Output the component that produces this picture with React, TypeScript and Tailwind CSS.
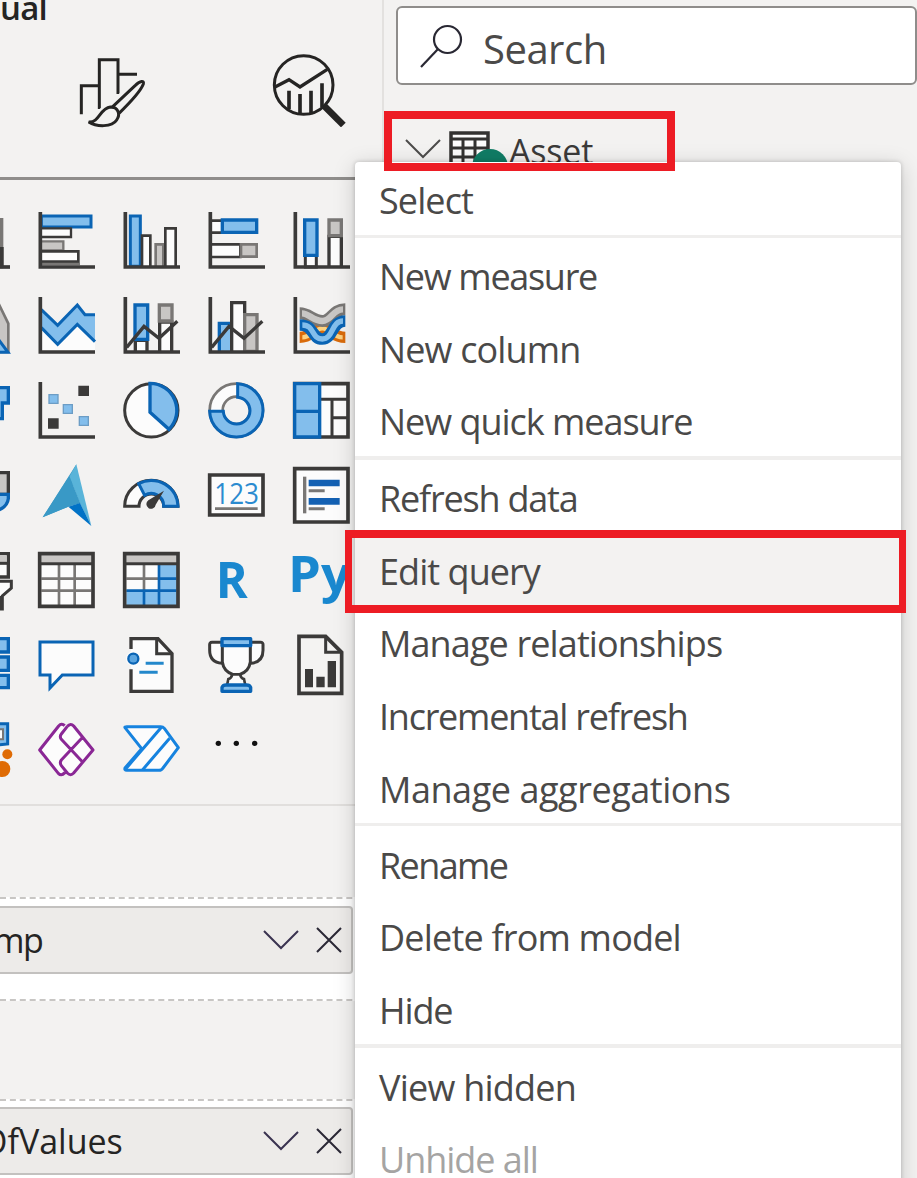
import React from "react";

const DARK = "#3b3a39";
const BLUE = "#0a64b4";
const SKY = "#83beec";
const GREY = "#797775";
const SILVER = "#c8c6c4";
const PAPER = "#fcfcfc";

type Kids = { children?: React.ReactNode };

function Icon({ children }: Kids) {
  return (
    <svg viewBox="0 0 171 171" className="h-[57px] w-[57px] overflow-visible" fill="none" strokeWidth="8">
      {children}
    </svg>
  );
}

const Axis = () => <path d="M7 0V165H171" stroke={DARK} strokeWidth="11" />;

const visuals: React.ReactNode[] = [
  // Row 1
  <>
    <path d="M120 22H147V165H120" fill={GREY} stroke={GREY} />
    <path d="M125 105H152V165H125" fill={DARK} />
    <path d="M100 165H171" stroke={DARK} strokeWidth="11" />
  </>,
  <>
    <path d="M10 12H159V45H10Z" fill={SKY} stroke={BLUE} strokeWidth="9" />
    <path d="M10 49H99V75H10" fill={PAPER} stroke={DARK} strokeWidth="7" />
    <path d="M10 88H76V115H10" fill={SILVER} stroke={GREY} strokeWidth="7" />
    <path d="M10 118H121V149H10" fill={PAPER} stroke={DARK} strokeWidth="8" />
    <path d="M10 156H126" stroke={GREY} strokeWidth="7" />
    <Axis />
  </>,
  <>
    <path d="M22 163V12H52V163Z" fill={SKY} stroke={BLUE} strokeWidth="9" />
    <path d="M57 163V71H82V163" fill={PAPER} stroke={DARK} />
    <path d="M98 163V97H121V163" fill={SILVER} stroke={GREY} />
    <path d="M127 163V49H158V163" fill={PAPER} stroke={DARK} />
    <Axis />
  </>,
  <>
    <path d="M10 26H45V62H10" fill={PAPER} stroke={DARK} />
    <path d="M43 24H146V61H43Z" fill={SKY} stroke={BLUE} strokeWidth="10" />
    <path d="M10 97H97V135H10" fill={PAPER} stroke={DARK} />
    <path d="M99 97H146V134H99Z" fill={SILVER} stroke={GREY} />
    <Axis />
  </>,
  <>
    <path d="M37 130H70V165H37Z" fill={PAPER} stroke={DARK} strokeWidth="9" />
    <path d="M35 24H72V130H35Z" fill={SKY} stroke={BLUE} strokeWidth="10" />
    <path d="M108 165V73H145V165" fill={PAPER} stroke={DARK} strokeWidth="10" />
    <path d="M108 24H145V71H108Z" fill={SILVER} stroke={GREY} strokeWidth="10" />
    <Axis />
  </>,
  // Row 2
  <>
    <path d="M130 6L166 80V165H110" fill={SILVER} stroke={GREY} />
    <path d="M110 92L165 166H110Z" fill={SKY} stroke={BLUE} strokeWidth="9" />
  </>,
  <>
    <path d="M10 92L59 142L118 82L171 134V160H10Z" fill={PAPER} />
    <path d="M10 38L59 85L118 22L142 52H171V134L118 82L59 142L10 92Z" fill={SKY} />
    <path d="M10 38L59 85L118 24L141 53H171M10 92L59 142L118 82L171 134" stroke={BLUE} strokeWidth="9" />
    <Axis />
  </>,
  <>
    <path d="M37 163V130H72V163M110 163V75H146V163" fill={PAPER} stroke={DARK} strokeWidth="10" />
    <path d="M36 24H74V127H36Z" fill={SKY} stroke={BLUE} strokeWidth="10" />
    <path d="M109 24H147V72H109Z" fill={SILVER} stroke={GREY} strokeWidth="10" />
    <path d="M11 151L63 88L108 124L163 73" stroke={DARK} strokeWidth="10" />
    <Axis />
  </>,
  <>
    <path d="M34 163V79H72V163" fill={SKY} stroke={BLUE} strokeWidth="10" />
    <path d="M71 163V17H110V163" fill={PAPER} stroke={DARK} strokeWidth="10" />
    <path d="M110 53H147V163H110Z" fill={SILVER} stroke={GREY} strokeWidth="10" />
    <path d="M11 151L63 88L108 124L163 73" stroke={DARK} strokeWidth="10" />
    <Axis />
  </>,
  <>
    <path d="M20 121C55 121 65 94 88 94S120 121 157 121" stroke="#d96b0b" strokeWidth="34" />
    <path d="M28 121C55 121 65 94 88 94S120 121 149 121" stroke="#fdd17f" strokeWidth="13" />
    <path d="M20 49C48 49 60 72 88 72S118 37 157 37" stroke={GREY} strokeWidth="36" />
    <path d="M27 49C48 49 60 72 88 72S118 37 150 37" stroke={SILVER} strokeWidth="19" />
    <path d="M20 84C65 84 55 126 88 126S115 72 157 72" stroke={BLUE} strokeWidth="35" />
    <path d="M28 84C65 84 55 126 88 126S115 72 150 72" stroke={SKY} strokeWidth="16" />
    <Axis />
  </>,
  // Row 3
  <>
    <path d="M110 17H166V63H148V110H110" fill={SKY} stroke={BLUE} strokeWidth="10" />
  </>,
  <>
    <path d="M121 11H153V42H121ZM30 109H62V140H30Z" fill={DARK} />
    <path d="M33 38H60V64H33ZM76 68H103V94H76ZM124 104H151V130H124Z" fill={SKY} stroke="#6c9dc5" strokeWidth="4" />
    <Axis />
  </>,
  <>
    <circle cx="85" cy="85" r="80" fill={PAPER} stroke={DARK} strokeWidth="9" />
    <path d="M81 4A81 81 0 0 1 138 142L81 91Z" fill={SKY} stroke={BLUE} strokeWidth="10" />
  </>,
  <>
    <circle cx="85" cy="85" r="60" stroke={PAPER} strokeWidth="38" />
    <circle cx="85" cy="85" r="80" stroke={GREY} />
    <circle cx="85" cy="85" r="41" stroke={GREY} />
    <path d="M89 5A80 80 0 1 1 5 88H46A40 40 0 1 0 89 46Z" fill={SKY} stroke={BLUE} strokeWidth="9" />
  </>,
  <>
    <path d="M5 5H165V165H5Z" fill={PAPER} stroke={DARK} strokeWidth="11" />
    <path d="M82 52H162M117 52V162M117 107H162" stroke={DARK} strokeWidth="9" />
    <path d="M5 5H80V165H5ZM5 88H80" fill={SKY} stroke={BLUE} strokeWidth="10" />
  </>,
  // Row 4
  <>
    <path d="M110 17H166V82H110" fill={SILVER} stroke={DARK} strokeWidth="10" />
    <path d="M110 82H166V95Q162 128 110 137" fill={SKY} stroke={BLUE} strokeWidth="10" />
  </>,
  <>
    <path d="M115 -8L14 151L91 119Z" fill="#3999c6" />
    <path d="M115 -8L160 177L126 109L94 29Z" fill="#59b4d9" />
    <path d="M94 27L14 151L91 119L127 109Z" fill="#3999c6" />
    <path d="M91 119L126 108L160 177Z" fill="#0072c6" />
  </>,
  <>
    <path d="M5 118A80 78 0 0 1 165 118H122A37 37 0 0 0 48 118Z" fill={PAPER} stroke={DARK} strokeWidth="9" />
    <path d="M47 50A80 78 0 0 1 165 118H122A37 37 0 0 0 65 85Z" fill={SKY} stroke={BLUE} strokeWidth="9" />
    <path d="M123 71L98 113A14 14 0 1 1 76 100Z" fill={DARK} />
  </>,
  <>
    <path d="M5 24H165V144H5Z" fill={PAPER} stroke={DARK} strokeWidth="11" />
    <text x="19" y="111" textLength="134" lengthAdjust="spacingAndGlyphs" fill="#2b8bd0" className="[font-family:'Open_Sans',sans-serif] text-[87px]">123</text>
    <path d="M21 125H149" stroke={GREY} />
  </>,
  <>
    <path d="M5 5H165V165H5Z" fill={PAPER} stroke={DARK} strokeWidth="11" />
    <path d="M35 29V139" stroke={GREY} strokeWidth="10" />
    <path d="M47 48H140M47 103H140" stroke="#1461b3" strokeWidth="20" />
    <path d="M47 71H95M47 125H95" stroke={GREY} strokeWidth="9" />
  </>,
  // Row 5
  <>
    <path d="M110 5H166V75H110" fill={PAPER} stroke={DARK} strokeWidth="10" />
    <path d="M110 10H161V32H110" fill={SILVER} />
    <path d="M110 34H162" stroke={DARK} strokeWidth="9" />
    <path d="M104 88H175V108L148 132V171H132V132L104 108Z" fill={PAPER} stroke={DARK} strokeWidth="9" />
    <path d="M132 132H148V174H132Z" fill={DARK} />
  </>,
  <>
    <path d="M5 5H165V164H5Z" fill={PAPER} />
    <path d="M10 10H160V32H10Z" fill={SILVER} />
    <path d="M63 37V160M110 37V160M10 80H160M10 116H160" stroke={GREY} />
    <path d="M5 35H165" stroke={DARK} strokeWidth="9" />
    <path d="M5 5H165V163H5Z" stroke={DARK} strokeWidth="11" />
  </>,
  <>
    <path d="M5 5H165V164H5Z" fill={PAPER} />
    <path d="M10 10H160V32H10Z" fill={SILVER} />
    <path d="M108 37H162V162H10V115H108Z" fill={SKY} />
    <path d="M63 37V115M10 80H108" stroke={GREY} />
    <path d="M108 37V160M63 116V160M108 80H160M10 116H160" stroke={BLUE} />
    <path d="M5 35H165" stroke={DARK} strokeWidth="9" />
    <path d="M5 5H165V163H5Z" stroke={DARK} strokeWidth="11" />
  </>,
  <>
    <text x="23" y="138" textLength="96" lengthAdjust="spacingAndGlyphs" fill="#1a88cf" className="[font-family:'Open_Sans',sans-serif] text-[152px] font-bold">R</text>
  </>,
  <>
    <text x="-15" y="120" textLength="188" lengthAdjust="spacingAndGlyphs" fill="#1a88cf" className="[font-family:'Open_Sans',sans-serif] text-[150px] font-bold">Py</text>
  </>,
  // Row 6
  <>
    <path d="M110 5H166V45H110ZM110 60H166V100H110ZM110 115H166V152H110Z" fill={SKY} stroke={BLUE} strokeWidth="10" />
  </>,
  <>
    <path d="M6 15H165V114H73L36 153V114H6Z" fill={PAPER} stroke={BLUE} strokeWidth="9" />
  </>,
  <>
    <path d="M24 36V5H105L147 50V163H24V97" fill={PAPER} stroke={DARK} strokeWidth="10" />
    <path d="M101 5V50H147" stroke={DARK} strokeWidth="9" />
    <circle cx="31" cy="65" r="22" fill={PAPER} />
    <circle cx="31" cy="65" r="15" fill="#5ba5e0" stroke={BLUE} strokeWidth="7" />
    <path d="M68 79H122M49 106H104" stroke="#2488cb" strokeWidth="9" />
  </>,
  <>
    <path d="M42 16H12Q4 16 5 26V40Q5 76 42 79M128 16H159Q166 16 165 26V40Q165 76 128 79" fill={PAPER} stroke={DARK} strokeWidth="9" />
    <path d="M43 22V75Q47 104 76 113H94Q123 104 127 75V22" fill={PAPER} stroke={DARK} strokeWidth="9" />
    <path d="M73 112Q70 124 61 126L57 145H112L108 126Q99 124 96 112Z" fill={PAPER} stroke={DARK} strokeWidth="8" />
    <path d="M42 5H128V26H42ZM42 163V151Q45 144 54 144H116Q125 144 128 151V163Z" fill={SKY} stroke={BLUE} strokeWidth="10" strokeLinejoin="round" />
  </>,
  <>
    <path d="M18 -2H98L146 46V169H18Z" fill="#f4f3f2" stroke={DARK} strokeWidth="11" />
    <path d="M98 -2V46H146" stroke={DARK} strokeWidth="9" />
    <path d="M36 96H60V151H36ZM70 119H95V151H70ZM104 72H129V151H104Z" fill={DARK} />
  </>,
  // Row 7
  <>
    <path d="M110 5H164V66L110 72" fill={SKY} stroke={BLUE} strokeWidth="9" />
    <path d="M110 22H150V52H110" fill={PAPER} stroke={GREY} strokeWidth="6" />
    <circle cx="163" cy="97" r="15" fill="#df6b04" />
    <circle cx="148" cy="141" r="24" fill="#df6b04" />
  </>,
  <>
    <path d="M69 6L6 84L64 156Q69 160 75 156L98 84L75 8Z" fill={PAPER} />
    <path d="M97 7L166 84L97 157L66 122L99 84L66 45Z" fill={PAPER} />
    <path
      d="M80 11Q71 2 62 12L5 84L61 154Q70 163 81 152M88 13Q98 2 107 12L165 84L107 153Q98 163 88 153L70 131Q64 122 70 114L134 46M88 13L70 36Q64 44 70 52L133 119"
      stroke="#8a2795"
      strokeWidth="9"
      strokeLinejoin="round"
    />
  </>,
  <>
    <path
      d="M6 17Q4 14 11 14H113Q120 14 124 19L166 77L120 138Q116 145 108 145H11Q4 145 6 138L56 80Z"
      fill={PAPER}
      stroke="#1683df"
      strokeWidth="9"
      strokeLinejoin="round"
    />
    <path d="M116 15L6 143M140 49L59 143" stroke="#1683df" strokeWidth="9" />
  </>,
  <>
    <g fill="#111">
      <circle cx="31" cy="64" r="8" />
      <circle cx="85" cy="64" r="8" />
      <circle cx="140" cy="64" r="8" />
    </g>
  </>,
];

function FormatIcon() {
  return (
    <svg viewBox="0 0 204 216" className="h-[72px] w-[68px]" fill="none" stroke="#252423" strokeWidth="9">
      <path d="M10 175V89H63M64 159V11H120V114M120 55H177" />
      <path d="M38 199C64 194 63 160 93 156L172 84C189 67 203 74 196 89C188 109 158 138 125 167C128 213 72 222 32 199Z" stroke="#f3f2f1" strokeWidth="22" />
      <path d="M32 198C64 201 65 157 97 153C121 153 128 175 116 192C102 214 56 213 32 198Z" fill="#f3f2f1" />
      <path d="M101 155L172 88C187 73 199 73 196 84C188 106 158 138 120 175" />
    </svg>
  );
}

function AnalyticsIcon() {
  return (
    <svg viewBox="0 0 222 222" className="h-[74px] w-[74px]" fill="none" stroke="#252423" strokeWidth="9">
      <circle cx="95" cy="96" r="88" />
      <path d="M9 102L51 80L84 102L166 49" strokeWidth="10" />
      <path d="M51 113V168M84 123V184M117 113V184M150 91V162" strokeWidth="11" />
      <path d="M158 160L214 216" strokeWidth="20" />
    </svg>
  );
}

function Chevron({ className }: { className: string }) {
  return (
    <svg viewBox="0 0 36 20" className={className} fill="none" strokeWidth="2">
      <path d="M1 1L18 18L35 1" />
    </svg>
  );
}

function WellField({ name, className }: { name: string; className: string }) {
  return (
    <div className="flex h-[68px] w-[353px] items-center rounded-r-sm border-2 border-l-0 border-[#c3c1bf] bg-[#edebe9]">
      <span className={`flex-1 whitespace-nowrap text-[34px] leading-[64px] text-[#252423] ${className}`}>{name}</span>
      <Chevron className="mr-[17px] h-5 w-9 stroke-[#3a3350]" />
      <svg viewBox="0 0 26 26" className="mr-[9px] h-[26px] w-[26px] stroke-[#2a2835]" strokeWidth="2">
        <path d="M1 1L25 25M25 1L1 25" />
      </svg>
    </div>
  );
}

const menu: { label: string; tracking: string; active?: boolean; muted?: boolean }[][] = [
  [{ label: "Select", tracking: "tracking-[-0.9px]" }],
  [
    { label: "New measure", tracking: "tracking-[-1.3px]" },
    { label: "New column", tracking: "tracking-[-0.85px]" },
    { label: "New quick measure", tracking: "tracking-[-1.03px]" },
  ],
  [
    { label: "Refresh data", tracking: "tracking-[-1.2px]" },
    { label: "Edit query", tracking: "tracking-[-0.95px]", active: true },
    { label: "Manage relationships", tracking: "tracking-[-0.88px]" },
    { label: "Incremental refresh", tracking: "tracking-[-1.25px]" },
    { label: "Manage aggregations", tracking: "tracking-[-0.45px]" },
  ],
  [
    { label: "Rename", tracking: "tracking-[-1.6px]" },
    { label: "Delete from model", tracking: "tracking-[-0.8px]" },
    { label: "Hide", tracking: "tracking-[-1.1px]" },
  ],
  [
    { label: "View hidden", tracking: "tracking-[-0.77px]" },
    { label: "Unhide all", tracking: "tracking-[-1.05px]", muted: true },
  ],
];

const separators = ["", "h-[3px]", "h-1", "h-[3px]", "h-1"];

function ContextMenu() {
  return (
    <div className="absolute left-[355px] top-[162px] h-[1040px] w-[546px] rounded bg-white shadow-[0_4px_22px_rgba(0,0,0,0.18),0_0_4px_rgba(0,0,0,0.2)]">
      {menu.map((group, i) => (
        <React.Fragment key={i}>
          {i > 0 && <div className={`${separators[i]} bg-[#efeeed]`} />}
          {group.map((item) => (
            <div
              key={item.label}
              className={`flex h-[72.7px] items-center whitespace-nowrap pl-6 pt-1.5 text-[36px] ${item.tracking} ${
                item.active ? "bg-[#f3f2f1]" : ""
              } ${item.muted ? "text-[#a5a4a3]" : "text-[#4a4948]"}`}
            >
              {item.label}
            </div>
          ))}
        </React.Fragment>
      ))}
    </div>
  );
}

export default function App() {
  return (
    <div className="relative flex h-[1178px] w-[917px] overflow-hidden bg-[#f3f2f1] [font-family:'Open_Sans','Noto_Sans',sans-serif]">
      <section className="h-full w-[384px] shrink-0 border-r-2 border-[#e3e1df]">
        <header className="h-[180px] overflow-hidden border-b-[3px] border-[#8f8d8b]">
          <h2 className="-mt-[14px] h-[45px] text-[33px] font-semibold leading-[44px] tracking-[-0.8px] text-[#252423]">ual</h2>
          <div className="flex pl-[78px] pt-[22px]">
            <div className="pt-[3px]">
              <FormatIcon />
            </div>
            <div className="pl-[126px]">
              <AnalyticsIcon />
            </div>
          </div>
        </header>
        <div className="-ml-[47px] grid h-[626px] grid-cols-[repeat(5,57px)] content-start gap-7 border-b-2 border-[#e1dfdd] pt-8">
          {visuals.map((visual, i) => (
            <Icon key={i}>{visual}</Icon>
          ))}
        </div>
        <div className="h-[91px]" />
        <div className="h-[104px] border-y-2 border-dashed border-[#c8c6c4] bg-white pt-[7px]">
          <WellField name="mp" className="-ml-[7px] tracking-[-1.5px]" />
        </div>
        <div className="h-[98px]" />
        <div className="h-[104px] border-y-2 border-dashed border-[#c8c6c4] bg-white pt-[6px]">
          <WellField name="OfValues" className="-ml-[19px]" />
        </div>
      </section>

      <section className="h-full min-w-0 flex-1">
        <div className="ml-3 mt-[6px] flex h-[79px] w-[521px] items-center rounded-md border-2 border-[#8f8d8b] bg-white">
          <svg viewBox="0 0 44 44" className="ml-[21px] h-11 w-11 shrink-0" fill="none" stroke="#292833" strokeWidth="2.2">
            <circle cx="28.5" cy="15.5" r="13.5" />
            <path d="M19 25L2 43" />
          </svg>
          <span className="pl-5 pt-[7px] text-[40px] tracking-[-0.5px] text-[#4b4a49]">Search</span>
        </div>
        <div className="flex h-[70px] items-start pl-[21px] pt-[46px]">
          <Chevron className="mt-2 h-5 w-9 stroke-[#4d4c4b]" />
          <svg viewBox="0 0 60 46" className="ml-2 h-[46px] w-[60px]" fill="none">
            <path d="M2 2H39V42H2Z" fill={PAPER} stroke="#333231" strokeWidth="3.5" />
            <path d="M3 8H38M3 17H38M3 26H38M14 8V40M26 8V40" stroke="#333231" strokeWidth="3" />
            <circle cx="41" cy="36" r="18" fill="#107c65" />
          </svg>
          <span className="-mt-[5px] text-[34px] tracking-[-0.2px] text-[#3b3a39]">Asset</span>
        </div>
      </section>

      <ContextMenu />
      <div className="absolute left-[384px] top-[111px] h-[60px] w-[291px] border-8 border-[#ed1c24]" />
      <div className="absolute left-[345px] top-[530px] h-[83px] w-[561px] border-8 border-x-[7px] border-[#ed1c24]" />
    </div>
  );
}
